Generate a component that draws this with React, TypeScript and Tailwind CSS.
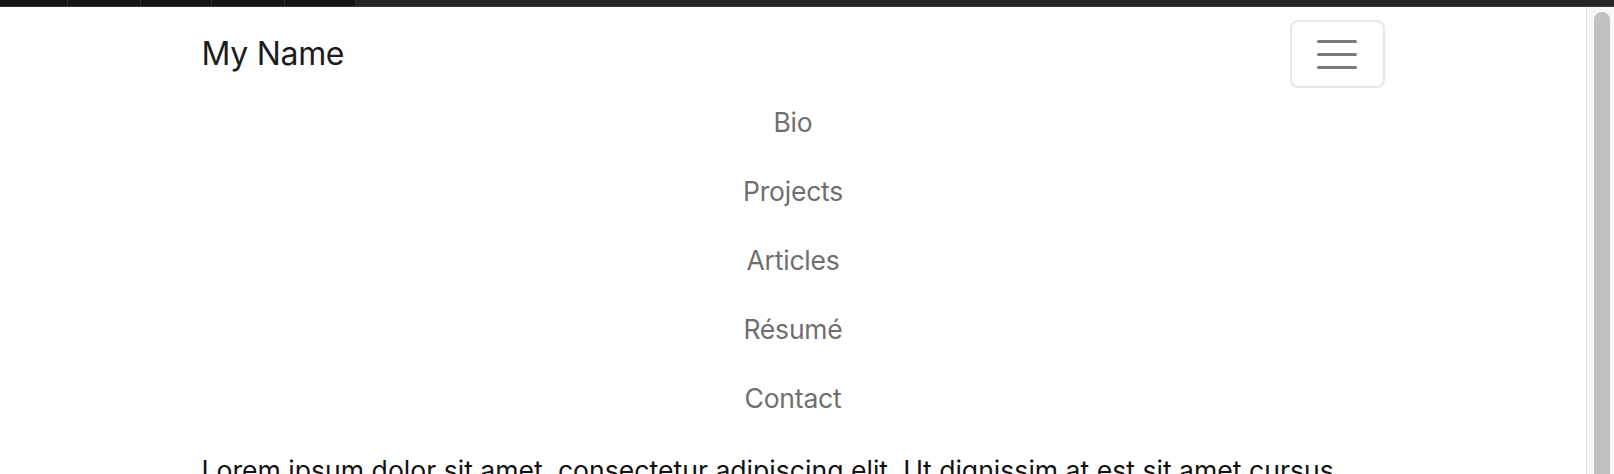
import React from "react";

const links = ["Bio", "Projects", "Articles", "Résumé", "Contact"];

const TopStrip = () => (
  <div className="flex h-[7px] bg-[#1a1a1a] border-b border-[#3a3a3a]">
    {[68, 73, 71, 73, 71].map((w, i) => (
      <div key={i} style={{ width: w }} className="h-full border-r border-[#2e2e2e] bg-[#151515]" />
    ))}
    <div className="flex-1 bg-[#262626]" />
  </div>
);

const App = () => {
  return (
    <div className="h-[474px] overflow-hidden bg-white font-['Inter',sans-serif]">
      <TopStrip />
      <div className="flex h-[467px]">
        <div className="flex-1 min-w-0">
          <div className="mx-auto w-[1183px]">
            <nav className="flex items-center justify-between pt-[13px]">
              <a className="text-[32px] leading-none text-[#1c1c1c] tracking-[-0.3px]">My Name</a>
              <button className="flex h-[68px] w-[95px] flex-col items-center justify-center gap-[10px] rounded-[8px] border-2 border-[#e6e6e6] bg-white">
                <span className="block h-[3px] w-[40px] rounded-full bg-[#7a7a7a]" />
                <span className="block h-[3px] w-[40px] rounded-full bg-[#7a7a7a]" />
                <span className="block h-[3px] w-[40px] rounded-full bg-[#7a7a7a]" />
              </button>
            </nav>
            <ul className="flex flex-col items-center">
              {links.map((l) => (
                <li key={l} className="flex h-[69px] items-center">
                  <a className="text-[26.5px] text-[#6f6f6f] tracking-[-0.2px]">{l}</a>
                </li>
              ))}
            </ul>
            <p className="pt-[18px] text-[26.6px] leading-[1.5] text-[#111]">
              Lorem ipsum dolor sit amet, consectetur adipiscing elit. Ut dignissim at est sit amet cursus
              pellentesque. Pellentesque habitant morbi tristique senectus et netus et malesuada fames ac turpis egestas.
            </p>
          </div>
        </div>
        <div className="w-[28px] shrink-0 border-l border-[#e4e4e4] bg-[#f7f7f7] pl-[7px] pt-[5px]">
          <div className="h-full w-[16px] rounded-t-full bg-[#c1c1c1]" />
        </div>
      </div>
    </div>
  );
};

export default App;
